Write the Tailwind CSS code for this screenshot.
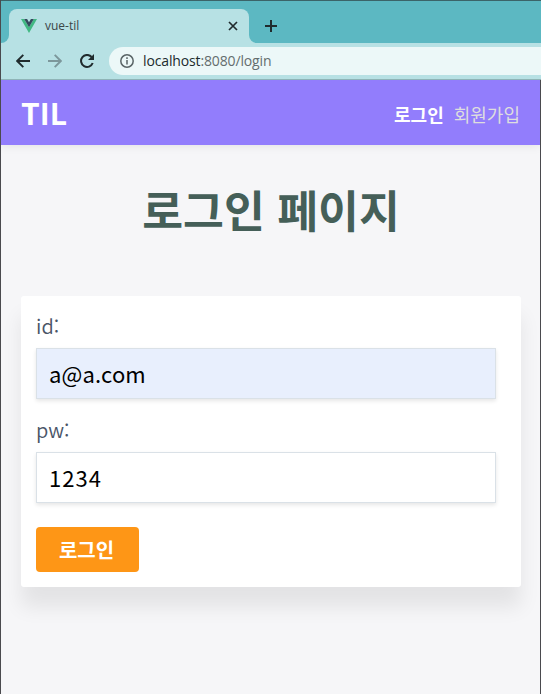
<!DOCTYPE html>
<html lang="ko">
<head>
    <meta charset="UTF-8">
    <meta name="viewport" content="width=device-width, initial-scale=1.0">
    <title>vue-til</title>
    <script src="https://cdn.jsdelivr.net/npm/@tailwindcss/browser@4"></script>
</head>
<body class="h-screen overflow-hidden flex flex-col bg-[#f6f6f8] border-l border-[#4a4a4e] font-['Noto_Sans_CJK_KR',sans-serif]">
    <!-- browser chrome -->
    <div class="shrink-0 h-[43px] bg-[#5cb8c2] border-t border-[#3b6469] flex items-end font-['Open_Sans',sans-serif]">
        <div class="w-2 h-[34px] shrink-0 bg-[#b7e1e4]"><div class="size-full bg-[#5cb8c2] rounded-br-lg"></div></div>
        <div class="w-60 h-[34px] bg-[#b7e1e4] rounded-t-lg flex items-center pl-3 pr-[11px]">
            <svg class="w-4 h-[14px]" viewBox="0 0 16 14">
                <path fill="#41b883" d="M0 0h3.2L8 8.3 12.8 0H16L8 14z"/>
                <path fill="#35495e" d="M3.2 0h2.9L8 3.3 9.9 0h2.9L8 8.3z"/>
            </svg>
            <span class="ml-2 text-[12px] leading-4 text-[#3a4648]">vue-til</span>
            <svg class="ml-auto size-[10px]" viewBox="0 0 10 10" fill="none" stroke="#202b2d" stroke-width="1.7">
                <path d="M1 1l8 8M9 1L1 9"/>
            </svg>
        </div>
        <div class="w-2 h-[34px] shrink-0 bg-[#b7e1e4]"><div class="size-full bg-[#5cb8c2] rounded-bl-lg"></div></div>
        <svg class="ml-2 mb-[11px] size-3" viewBox="0 0 12 12" fill="none" stroke="#202b2d" stroke-width="2">
            <path d="M6 0v12M0 6h12"/>
        </svg>
    </div>
    <div class="shrink-0 h-[37px] bg-[#b7e1e4] border-b border-[#8fb4b7] flex items-center pl-[15px] font-['Open_Sans',sans-serif]">
        <svg class="size-[14px]" viewBox="0 0 14 14" fill="none" stroke="#202b2d" stroke-width="1.9">
            <path d="M14 7H1.5M7.3.8L1.2 7l6.1 6.2"/>
        </svg>
        <svg class="ml-[18px] size-[14px]" viewBox="0 0 14 14" fill="none" stroke="#7c979b" stroke-width="1.9">
            <path d="M0 7h12.5M6.7.8L12.8 7l-6.1 6.2"/>
        </svg>
        <svg class="ml-[18px] size-[14px]" viewBox="0 0 14 14" fill="none">
            <path stroke="#202b2d" stroke-width="2" d="M11.6 3A6 6 0 1 0 12.7 9"/>
            <path fill="#202b2d" d="M14 0v6H8z"/>
        </svg>
        <div class="ml-[15px] flex-1 h-7 bg-[#ecf8f8] rounded-l-full flex items-center pl-[11px]">
            <svg class="size-[14px]" viewBox="0 0 14 14" fill="none" stroke="#596466" stroke-width="1.5">
                <circle cx="7" cy="7" r="6.2"/>
                <path d="M7 6v4.5M7 3.3v1.6"/>
            </svg>
            <span class="ml-[9px] text-[14px] leading-5 tracking-[-0.14px] text-[#646d6e]"><span class="text-[#202b2d]">localhost</span>:8080/login</span>
        </div>
    </div>

    <!-- page -->
    <div class="flex-1 border-r border-[#4a4a4e]">
        <header class="relative h-[65px] bg-[#927dfc] flex items-center justify-between px-5 shadow-[0_0_10px_rgba(0,0,0,0.1)] [clip-path:inset(0_0_-20px_0)]">
            <a class="pb-[2px] text-[30px] leading-[44px] font-bold text-white">TIL</a>
            <nav class="flex gap-[10px] text-[18px] leading-[27px] pt-1">
                <a class="font-bold text-white">로그인</a>
                <a class="text-[#dedede]">회원가입</a>
            </nav>
        </header>

        <main class="pl-5 pr-[19px]">
            <h1 class="pt-[30px] text-center text-[44.4px] leading-[67px] font-bold text-[#455f58]">로그인 페이지</h1>
            <form class="mt-[54px] h-[291px] rounded-[3px] bg-white px-[15px] pt-[15px] shadow-[0_20px_20px_rgba(0,0,0,0.08)]">
                <label class="block h-[37px] text-[20px] leading-[30px] text-[#4a5568] font-[350]" for="id">id:</label>
                <input id="id" type="text" value="a@a.com"
                    class="block w-[460px] h-[51px] px-3 pb-[2px] border border-[#dae1e7] bg-[#e8effd] text-[22px] tracking-[0.1px] text-black shadow-[0_2px_4px_rgba(0,0,0,0.1)]">
                <label class="block mt-4 h-[37px] text-[20px] leading-[30px] text-[#4a5568] font-[350]" for="pw">pw:</label>
                <input id="pw" type="text" value="1234"
                    class="block w-[460px] h-[51px] px-3 pb-[2px] border border-[#dae1e7] bg-white text-[22px] tracking-[1px] text-black shadow-[0_2px_4px_rgba(0,0,0,0.1)]">
                <button type="button" class="block mt-6 w-[103px] h-[45px] pr-[2px] rounded-[4px] bg-[#fe9616] text-white text-[20px] leading-[30px] font-bold">로그인</button>
            </form>
        </main>
    </div>
</body>
</html>
